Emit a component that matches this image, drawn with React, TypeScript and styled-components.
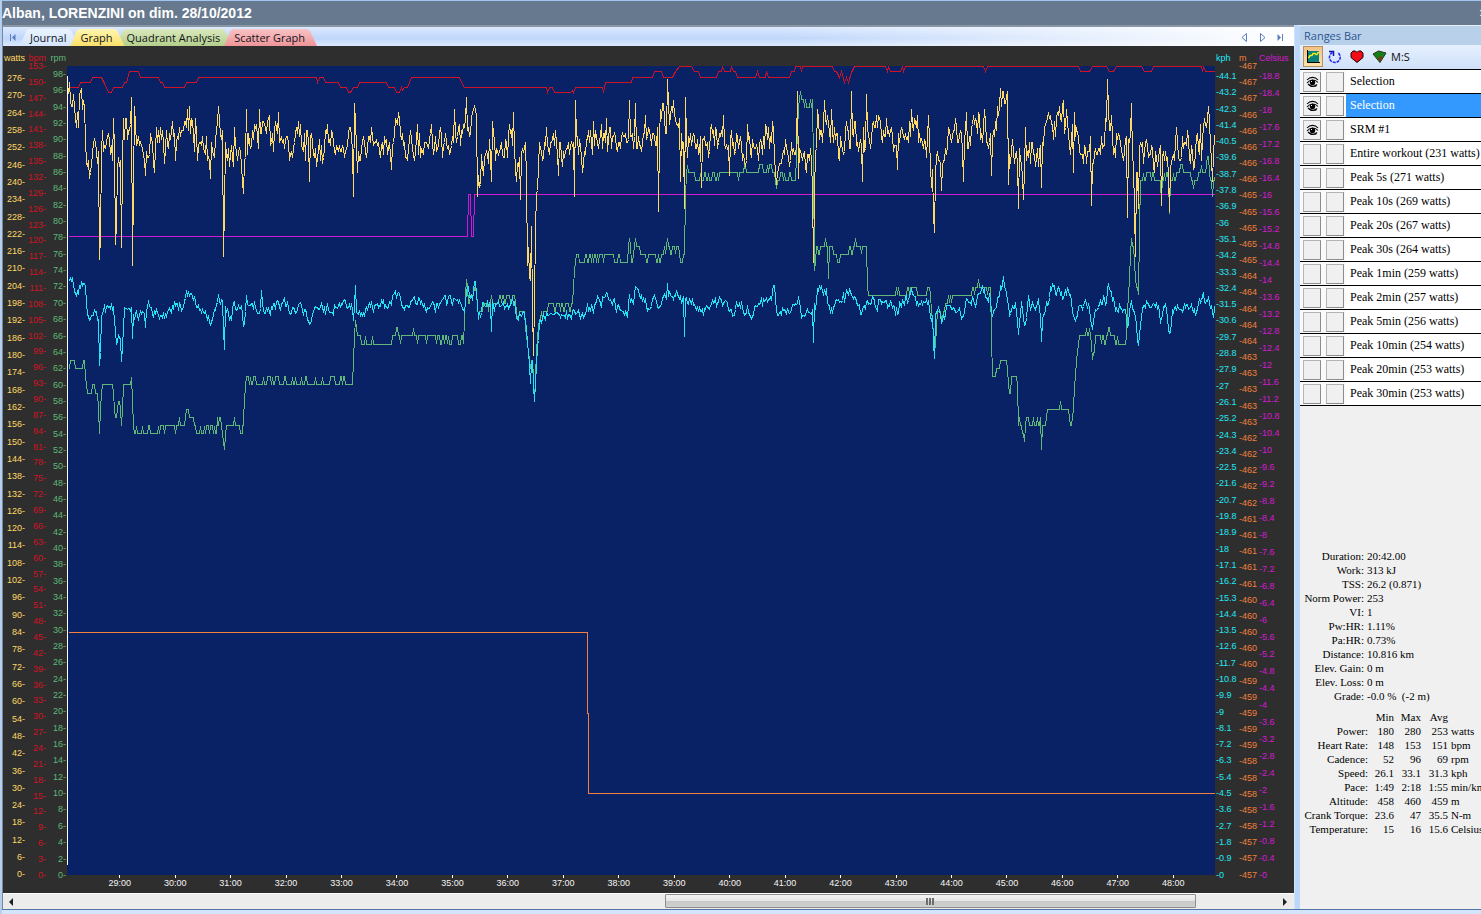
import React, { useState } from 'react'
import styled, { createGlobalStyle, css } from 'styled-components'

const GlobalStyle = createGlobalStyle`
  * {
    box-sizing: border-box;
  }

  body {
    margin: 0;
    background: #d3e4fb;
    font-family: 'Liberation Sans', Arial, sans-serif;
  }

  button {
    font: inherit;
    color: inherit;
    padding: 0;
    border: none;
    background: none;
  }

  ul, dl, dd, h1, h2 {
    margin: 0;
    padding: 0;
    list-style: none;
  }
`

/* ---------- chart geometry ---------- */

const LEFT = 68
const RIGHT = 1215
const TOP = 66
const BOTTOM = 875

const COLORS = {
    watts: '#ffd966',
    bpm: '#cf1326',
    rpm: '#5fb878',
    kph: '#22e6f7',
    alt: '#f0803c',
    temp: '#d419d4',
}

type Point = [number, number]

// Small deterministic generator, so the traces are stable between renders
const createRandom = (seed: number) => {
    let s = seed
    return () => {
        s = (s * 16807) % 2147483647
        return s / 2147483647
    }
}

const interpolate = (points: Point[], x: number) => {
    if (x <= points[0][0]) return points[0][1]
    for (let i = 1; i < points.length; i++) {
        const [x1, y1] = points[i]
        if (x <= x1) {
            const [x0, y0] = points[i - 1]
            return y0 + ((y1 - y0) * (x - x0)) / (x1 - x0)
        }
    }
    return points[points.length - 1][1]
}

interface TraceOptions {
    seed: number
    amplitude: number
    step: number
    spikes?: Point[]
}

const buildTrace = (base: Point[], { seed, amplitude, step, spikes = [] }: TraceOptions): Point[] => {
    const random = createRandom(seed)
    const peaks = new Map(spikes)
    const result: Point[] = []
    let drift = 0
    for (let x = LEFT; x <= RIGHT; x++) {
        drift = drift * 0.4 + (random() + random() - 1) * amplitude
        const peak = peaks.get(x)
        const y = peak ?? interpolate(base, x) + drift
        result.push([x, BOTTOM - 1 - Math.round((BOTTOM - 1 - y) / step) * step])
    }
    return result
}

const toPath = (points: Point[]) => 'M' + points.map(([x, y]) => `${x} ${y.toFixed(1)}`).join('L')

/* ---------- recorded channels ---------- */

const wattsBase: Point[] = [
    [68, 100], [70, 90], [74, 97], [76, 118], [80, 103], [83, 94], [85, 132], [87, 158], [90, 163], [95, 153], [98, 165],
    [102, 142], [108, 138], [112, 145], [119, 170], [122, 160], [125, 132], [130, 145], [134, 125], [137, 148], [150, 146],
    [175, 146], [184, 135], [190, 122], [194, 145], [206, 152], [214, 155], [219, 128], [225, 155], [232, 155], [238, 138],
    [243, 165], [246, 135], [254, 135], [262, 130], [272, 142], [290, 145], [310, 145], [325, 150], [350, 144], [358, 155],
    [370, 144], [390, 148], [395, 125], [402, 144], [430, 147], [464, 140], [470, 128], [475, 112], [479, 180], [482, 150],
    [500, 147], [512, 132], [516, 168], [520, 148], [525, 155], [527, 220], [530, 265], [533, 300], [536, 200], [539, 162],
    [545, 148], [570, 145], [580, 150], [600, 138], [630, 137], [655, 135], [667, 112], [678, 128], [682, 160], [688, 135],
    [700, 148], [720, 142], [730, 150], [760, 150], [772, 132], [777, 162], [785, 148], [812, 160], [815, 150], [818, 125],
    [830, 130], [836, 142], [850, 135], [860, 145], [870, 132], [895, 140], [905, 132], [927, 138], [932, 175], [937, 150],
    [942, 160], [948, 140], [960, 148], [975, 128], [990, 125], [998, 112], [1002, 98], [1006, 108], [1009, 155],
    [1015, 145], [1022, 165], [1028, 142], [1040, 150], [1048, 122], [1067, 120], [1071, 150], [1100, 152], [1106, 120],
    [1112, 138], [1118, 135], [1125, 158], [1131, 130], [1136, 190], [1140, 150], [1150, 145], [1162, 155], [1172, 155],
    [1180, 144], [1200, 150], [1207, 125], [1211, 150], [1215, 140],
]

const wattsSpikes: Point[] = [
    [69, 83], [71, 106], [76, 128], [99, 259], [100, 238], [102, 129], [113, 118], [115, 245], [116, 222], [119, 167],
    [121, 248], [123, 118], [131, 98], [132, 265], [133, 186], [134, 106], [145, 176], [154, 173], [156, 127], [187, 109],
    [189, 106], [195, 118], [210, 177], [218, 106], [223, 256], [224, 208], [234, 127], [242, 180], [243, 193], [246, 109],
    [259, 109], [278, 112], [298, 121], [309, 180], [353, 197], [354, 102], [355, 120], [357, 171], [371, 127], [391, 168],
    [395, 118], [431, 124], [454, 109], [466, 98], [474, 107], [475, 108], [477, 196], [479, 188], [491, 182], [492, 121],
    [513, 112], [516, 181], [520, 200], [527, 264], [529, 278], [531, 225], [532, 307], [533, 356], [534, 300], [558, 176],
    [574, 196], [575, 101], [582, 173], [593, 121], [606, 118], [629, 101], [635, 104], [645, 115], [658, 210], [667, 80],
    [680, 182], [684, 208], [685, 98], [701, 187], [723, 115], [729, 175], [747, 123], [772, 121], [776, 185], [797, 92],
    [798, 178], [812, 190], [813, 262], [814, 192], [817, 109], [824, 101], [831, 109], [851, 92], [862, 180], [866, 95],
    [897, 168], [911, 109], [928, 115], [931, 188], [933, 215], [934, 233], [941, 190], [963, 181], [966, 112], [978, 112],
    [984, 109], [991, 174], [1002, 90], [1007, 92], [1008, 185], [1018, 207], [1023, 200], [1025, 127], [1041, 187],
    [1048, 112], [1066, 109], [1073, 173], [1074, 113], [1091, 205], [1107, 78], [1108, 110], [1127, 216], [1131, 104],
    [1134, 212], [1135, 256], [1138, 207], [1161, 205], [1169, 210], [1200, 123], [1208, 107], [1212, 180],
]

const kphBase: Point[] = [
    [68, 285], [70, 279], [73, 281], [76, 298], [79, 287], [83, 281], [85, 290], [87, 318], [90, 318], [95, 312],
    [98, 316], [101, 313], [108, 304], [113, 310], [116, 343], [119, 333], [122, 350], [124, 306], [135, 310], [145, 316],
    [148, 306], [155, 315], [170, 308], [185, 301], [187, 293], [191, 294], [195, 303], [203, 312], [210, 322],
    [218, 300], [221, 299], [226, 315], [231, 315], [234, 301], [241, 310], [243, 332], [246, 303], [265, 309],
    [280, 301], [290, 309], [300, 305], [309, 320], [315, 307], [330, 309], [345, 303], [357, 316], [370, 309],
    [385, 306], [395, 294], [405, 303], [440, 305], [455, 300], [464, 308], [466, 291], [472, 295], [475, 284],
    [478, 320], [483, 306], [500, 305], [512, 299], [516, 317], [524, 314], [526, 330], [529, 365], [530, 380],
    [532, 357], [534, 398], [537, 350], [539, 325], [545, 313], [570, 313], [590, 309], [605, 300], [620, 305],
    [627, 316], [629, 292], [633, 305], [635, 290], [645, 304], [660, 303], [667, 291], [678, 298], [688, 298],
    [700, 311], [723, 299], [729, 312], [740, 303], [750, 311], [760, 306], [774, 293], [778, 316], [790, 306],
    [798, 300], [800, 312], [812, 313], [815, 307], [817, 292], [824, 290], [830, 306], [840, 303], [850, 292],
    [860, 309], [867, 300], [897, 309], [911, 292], [918, 305], [928, 298], [931, 322], [936, 310], [941, 322],
    [948, 302], [963, 316], [966, 295], [970, 304], [978, 291], [990, 295], [992, 316], [1000, 286], [1003, 278],
    [1006, 290], [1009, 315], [1015, 303], [1018, 328], [1021, 306], [1025, 325], [1028, 299], [1035, 309],
    [1038, 294], [1041, 325], [1045, 309], [1050, 291], [1060, 295], [1068, 290], [1073, 318], [1080, 303],
    [1088, 302], [1092, 320], [1096, 307], [1105, 300], [1108, 285], [1112, 305], [1125, 310], [1128, 326],
    [1131, 298], [1138, 338], [1142, 306], [1157, 306], [1161, 323], [1165, 303], [1169, 328], [1175, 306],
    [1190, 306], [1194, 314], [1200, 302], [1208, 294], [1212, 314], [1215, 304],
]

const kphSpikes: Point[] = [
    [99, 365], [100, 352], [121, 361], [132, 338], [145, 327], [223, 330], [224, 349], [261, 290], [353, 320],
    [355, 285], [491, 331], [530, 383], [533, 385], [534, 401], [635, 286], [667, 283], [684, 336], [813, 342],
    [934, 358], [933, 342], [1003, 276], [1018, 334], [1041, 341], [1108, 283], [1137, 340], [1169, 333],
]

const rpmBase: Point[] = [
    [68, 368], [70, 360], [74, 360], [76, 374], [79, 368], [82, 360], [84, 362], [86, 392], [89, 399], [92, 386],
    [97, 392], [98, 410], [99, 433], [101, 392], [103, 384], [112, 384], [115, 415], [117, 410], [119, 402],
    [121, 425], [123, 386], [130, 384], [131, 376], [132, 400], [133, 431], [155, 430], [165, 426], [182, 425],
    [187, 411], [191, 411], [195, 425], [202, 433], [208, 427], [216, 429], [220, 417], [222, 433], [224, 433],
    [228, 429], [235, 425], [242, 431], [245, 384], [248, 380], [300, 382], [352, 382], [353, 360], [355, 320],
    [357, 336], [361, 343], [380, 342], [394, 338], [396, 328], [400, 336], [440, 339], [463, 341], [464, 310],
    [466, 279], [468, 296], [473, 294], [475, 280], [478, 313], [482, 304], [500, 298], [510, 298], [513, 288],
    [517, 315], [524, 306], [526, 340], [530, 372], [532, 355], [534, 401], [537, 335], [540, 312], [550, 304],
    [570, 304], [572, 296], [574, 270], [576, 255], [582, 264], [593, 255], [605, 257], [627, 262], [629, 240],
    [632, 262], [635, 242], [640, 254], [658, 258], [667, 246], [678, 250], [682, 264], [684, 256], [685, 200],
    [686, 172], [700, 176], [710, 176], [730, 174], [773, 168], [776, 188], [780, 176], [795, 180], [798, 110],
    [800, 95], [803, 104], [812, 104], [813, 160], [814, 265], [816, 247], [824, 244], [830, 250], [838, 257],
    [848, 252], [856, 245], [862, 252], [866, 240], [867, 280], [869, 293], [905, 293], [912, 284], [918, 294],
    [929, 292], [932, 320], [934, 350], [937, 305], [941, 318], [948, 297], [970, 295], [977, 285], [990, 288],
    [991, 340], [992, 380], [996, 368], [999, 360], [1006, 361], [1009, 390], [1012, 376], [1017, 378],
    [1018, 422], [1023, 427], [1026, 418], [1033, 423], [1040, 420], [1044, 423], [1048, 409], [1068, 410],
    [1071, 425], [1073, 405], [1076, 360], [1079, 336], [1090, 335], [1092, 358], [1095, 343], [1106, 337],
    [1108, 322], [1112, 340], [1125, 342], [1128, 300], [1131, 240], [1133, 252], [1135, 285], [1138, 295],
    [1140, 180], [1150, 174], [1158, 180], [1175, 176], [1183, 166], [1193, 180], [1205, 168], [1208, 158],
    [1212, 190], [1215, 172],
]

const rpmSpikes: Point[] = [
    [223, 442], [224, 450], [466, 278], [534, 401], [629, 238], [635, 238], [667, 238], [797, 132], [800, 90],
    [828, 279], [934, 352], [1024, 441], [1041, 450], [1092, 360], [1131, 238], [1161, 205], [1169, 213], [1212, 193],
]

const bpmLine: Point[] = [
    [68, 87], [78, 87], [80, 82], [90, 82], [92, 77], [101, 77], [104, 83], [108, 92], [111, 92], [113, 87], [122, 87],
    [124, 82], [126, 82], [129, 71], [138, 71], [140, 77], [158, 77], [160, 82], [162, 82], [164, 87], [184, 87],
    [186, 82], [196, 82], [198, 77], [316, 77], [317, 82], [319, 77], [323, 77], [325, 82], [338, 82], [340, 87],
    [346, 87], [348, 92], [350, 92], [353, 87], [357, 87], [359, 82], [386, 82], [388, 87], [394, 87], [396, 92],
    [399, 92], [401, 87], [402, 90], [404, 87], [407, 87], [411, 77], [459, 77], [461, 82], [464, 87], [546, 87],
    [547, 92], [549, 87], [552, 87], [554, 92], [570, 92], [572, 90], [573, 92], [575, 87], [602, 87], [603, 92],
    [605, 82], [631, 82], [632, 77], [652, 77], [654, 71], [661, 71], [663, 77], [672, 77], [675, 71], [679, 66],
    [691, 66], [694, 71], [698, 71], [700, 77], [716, 77], [718, 71], [721, 71], [722, 66], [724, 71], [730, 71],
    [731, 66], [733, 71], [735, 71], [737, 77], [755, 77], [757, 71], [759, 77], [765, 77], [766, 71], [768, 77],
    [789, 77], [791, 71], [794, 71], [795, 66], [800, 66], [801, 71], [802, 66], [832, 66], [834, 71], [836, 71],
    [839, 77], [841, 71], [844, 82], [846, 77], [848, 82], [851, 72], [854, 66], [885, 66], [887, 71], [888, 66],
    [890, 71], [900, 71], [902, 66], [903, 71], [905, 66], [983, 66], [985, 71], [987, 66], [1078, 66], [1080, 71],
    [1089, 71], [1092, 66], [1106, 66], [1109, 71], [1113, 71], [1116, 66], [1141, 66], [1144, 71], [1151, 71],
    [1153, 66], [1201, 66], [1202, 71], [1203, 66], [1205, 71], [1215, 71],
]

const tempLine: Point[] = [
    [68, 236], [467, 236], [468, 194], [470, 194], [471, 236], [473, 236], [474, 194], [1215, 194],
]

const altLine: Point[] = [[68, 632], [587, 632], [587, 713], [588, 713], [588, 793], [1215, 793]]

const traces = [
    { color: COLORS.bpm, d: toPath(bpmLine) },
    { color: COLORS.alt, d: toPath(altLine) },
    { color: COLORS.temp, d: toPath(tempLine) },
    { color: COLORS.rpm, d: toPath(buildTrace(rpmBase, { seed: 911, amplitude: 6, step: 8.16, spikes: rpmSpikes })) },
    { color: COLORS.kph, d: toPath(buildTrace(kphBase, { seed: 4177, amplitude: 8, step: 1, spikes: kphSpikes })) },
    { color: COLORS.watts, d: toPath(buildTrace(wattsBase, { seed: 2012, amplitude: 21, step: 3, spikes: wattsSpikes })) },
]

/* ---------- axes ---------- */

interface AxisData {
    unit: string
    color: string
    side: 'left' | 'right'
    inset: number
    labels: string[]
}

const scale = (max: number, step: number, from = 0) => {
    const count = Math.round((max - from) / step)
    return Array.from({ length: count + 1 }, (_, i) => String(Number((max - i * step).toFixed(1))))
}

const leftAxes: AxisData[] = [
    { unit: 'watts', color: COLORS.watts, side: 'left', inset: 12, labels: scale(276, 6) },
    { unit: 'bpm', color: COLORS.bpm, side: 'left', inset: 0, labels: scale(153, 3) },
    { unit: 'rpm', color: COLORS.rpm, side: 'left', inset: 8, labels: scale(98, 2) },
]

const rightAxes: AxisData[] = [
    { unit: 'kph', color: COLORS.kph, side: 'right', inset: 10, labels: scale(44.1, 0.9) },
    {
        unit: 'm',
        color: COLORS.alt,
        side: 'right',
        inset: 0,
        labels: scale(467, 0.2, 457).map(v => String(Math.round(Number(v)))),
    },
    { unit: 'Celsius', color: COLORS.temp, side: 'right', inset: 10, labels: scale(18.8, 0.4) },
]

const minutes = Array.from({ length: 20 }, (_, i) => `${29 + i}:00`)

/* ---------- layout ---------- */

const Window = styled.div`
  display: flex;
  flex-direction: column;
  min-height: 100vh;
  border-top: 1px solid #a3c4ee;
  border-left: 2px solid #b5cff0;
`

const TitleBar = styled.header`
  display: flex;
  align-items: center;
  justify-content: space-between;
  height: 24px;
  overflow: hidden;
  background: #67798e;
  color: #ffffff;
`

const Title = styled.h1`
  font-size: 14px;
  line-height: 24px;
  font-weight: 700;
  white-space: nowrap;
`

const CloseButton = styled.button`
  flex: none;
  width: 8px;
  margin-right: -6px;
  font-size: 14px;
  line-height: 24px;
`

const Body = styled.div`
  display: grid;
  grid-template-columns: minmax(0, 1fr) 187px;
  flex: 1;
  border-bottom: 1px solid #4f74a6;
  margin-bottom: 4px;
`

const Workspace = styled.main`
  display: flex;
  flex-direction: column;
  border-top: 2px solid #8b96a5;
  border-left: 1px solid #7a8797;
`

const TabBar = styled.nav`
  display: flex;
  align-items: flex-end;
  height: 19px;
  background: linear-gradient(90deg, rgba(255, 255, 255, 0) 60%, #ffffff 100%), linear-gradient(#dbe9fe, #bfd6fb 60%, #dce9fd);
`

const NavButton = styled.button`
  display: flex;
  align-items: center;
  justify-content: center;
  width: 18px;
  height: 18px;
  color: #5b7fb8;

  &:last-child {
    margin-right: 5px;
  }
`

const TabList = styled.div`
  display: flex;
  flex: 1;
  margin-left: -2px;
`

const Tab = styled.button<{ $fill: string; $active?: boolean }>`
  position: relative;
  z-index: ${({ $active }) => ($active ? 1 : 0)};
  height: 17px;
  padding: 0 12px 0 11px;
  margin-right: -9px;
  background: ${({ $fill }) => $fill};
  clip-path: polygon(0 100%, 2px 88%, 7px 12%, 10px 0, calc(100% - 10px) 0, calc(100% - 7px) 12%, calc(100% - 1px) 88%, 100% 100%);
  font-family: 'Open Sans', 'Noto Sans', sans-serif;
  font-size: 11px;
  line-height: 17px;
  color: #10151c;
  white-space: nowrap;
`

const Chart = styled.section`
  display: grid;
  grid-template-columns: 23px 21px 20px minmax(0, 1fr) 23px 20px 36px;
  grid-template-rows: 20px minmax(400px, 1fr) 18px;
  flex: 1;
  background: #2e2e2e;
  font-size: 9px;
`

const AxisUnit = styled.div<{ $side: string }>`
  display: flex;
  justify-content: ${({ $side }) => ($side === 'left' ? 'flex-end' : 'flex-start')};
  grid-row: 1;
  padding: 0 1px;
  line-height: 25px;
  white-space: nowrap;
`

const AxisScale = styled.ul<{ $inset: number; $side: string }>`
  display: flex;
  flex-direction: column;
  justify-content: space-between;
  grid-row: 2;
  padding: ${({ $inset }) => $inset}px 1px 0;
  text-align: ${({ $side }) => ($side === 'left' ? 'right' : 'left')};

  li {
    height: 0;
    line-height: 0;
  }
`

const Plot = styled.svg`
  grid-column: 4;
  grid-row: 2;
  display: block;
  width: 100%;
  height: 100%;
  background: #082265;

  path {
    fill: none;
    stroke-width: 1px;
    vector-effect: non-scaling-stroke;
    shape-rendering: crispEdges;
  }
`

const TimeAxis = styled.ul`
  display: grid;
  grid-template-columns: repeat(20, 1fr);
  grid-column: 4;
  grid-row: 3;
  padding: 0 14px 0 25px;
  color: #f4f4f4;
  text-align: center;

  li {
    line-height: 10px;
  }

  li::before {
    content: '';
    display: block;
    width: 1px;
    height: 3px;
    margin: 0 auto;
    background: #ffffff;
  }
`

const ScrollBar = styled.div`
  display: flex;
  height: 16px;
  border-top: 1px solid #ffffff;
  background: #ececec;

  button {
    height: 15px;
    color: #202020;
  }

  button:last-child {
    margin-right: 0;
  }
`

const ScrollTrack = styled.div`
  flex: 1;
`

const ScrollThumb = styled.div`
  display: flex;
  align-items: center;
  justify-content: center;
  gap: 1px;
  height: 14px;
  border: 1px solid #8e8e8e;
  border-radius: 1px;
  background: linear-gradient(#f4f4f4 0%, #e6e6e6 48%, #c9c9c9 52%, #cfcfcf 100%);

  i {
    width: 2px;
    height: 7px;
    background: #6e6e6e;
  }
`

const Panel = styled.aside`
  display: flex;
  flex-direction: column;
  overflow: hidden;
  border-top: 1px solid #e6eefa;
  border-left: 5px solid #bdd7fb;
  margin-left: 1px;
  background: #f0f0f0;
`

const PanelTitle = styled.h2`
  padding-left: 4px;
  background: #b9d0ea;
  color: #2b568f;
  font-family: 'Open Sans', 'Noto Sans', sans-serif;
  font-size: 11px;
  font-weight: 400;
  line-height: 19px;
`

const Toolbar = styled.div`
  display: flex;
  align-items: center;
  gap: 2px;
  height: 24px;
  padding: 0 3px 1px;
  background: linear-gradient(#e6f0ff, #cfe0f8);
  font-family: 'Open Sans', 'Noto Sans', sans-serif;
  font-size: 11px;
`

const ToolButton = styled.button<{ $active?: boolean }>`
  display: flex;
  align-items: center;
  justify-content: center;
  width: 20px;
  height: 21px;
  color: #111111;

  ${({ $active }) => $active && css`
    border: 1px solid #b98f5a;
    background: linear-gradient(#f0c28a, #ffe2ad);
  `}
`

const TextToolButton = styled(ToolButton)`
  width: auto;
`

const RangeList = styled.ul`
  border-bottom: 1px solid #000000;
`

const RangeRow = styled.li`
  display: flex;
  align-items: center;
  height: 24px;
  border-top: 1px solid #000000;
  background: #ffffff;
`

const RangeCells = styled.div`
  display: flex;
  gap: 5px;
  height: 23px;
  padding: 2px 2px 1px 3px;
  background: #fafafa;
`

const CellButton = styled.button`
  display: flex;
  align-items: center;
  justify-content: center;
  width: 18px;
  height: 20px;
  border: 1px solid #b4b4b4;
  border-right-color: #8c8c8c;
  border-bottom-color: #8c8c8c;
  background: #f0f0f0;
`

const RangeName = styled.button<{ $selected: boolean }>`
  flex: 1;
  height: 23px;
  padding-left: 4px;
  background: ${({ $selected }) => ($selected ? '#3399ff' : '#ffffff')};
  color: ${({ $selected }) => ($selected ? '#ffffff' : '#000000')};
  font-family: 'Liberation Serif', 'Times New Roman', serif;
  font-size: 12px;
  line-height: 23px;
  text-align: left;
  white-space: nowrap;
`

const Stats = styled.section`
  margin-top: auto;
  padding-bottom: 73px;
  font-family: 'Liberation Serif', 'Times New Roman', serif;
  font-size: 11px;
  line-height: 14px;
  white-space: pre;
`

const Totals = styled.dl`
  display: grid;
  grid-template-columns: 64px 1fr;
  column-gap: 3px;

  dt {
    text-align: right;
  }
`

const Summary = styled.table`
  width: 100%;
  margin-top: 7px;
  border-collapse: collapse;
  table-layout: fixed;

  th, td {
    padding: 0;
    font-weight: 400;
    text-align: right;
  }

  td:last-child {
    padding-left: 3px;
    text-align: left;
  }
`

/* ---------- icons ---------- */

const ArrowIcon = ({ flip, bar }: { flip?: boolean; bar?: boolean }) => (
    <svg width="9" height="9" viewBox="0 0 9 9" aria-hidden="true">
        <g transform={flip ? 'translate(9 0) scale(-1 1)' : undefined} stroke="currentColor">
            {bar ? (
                <>
                    <path d="M1.5 1v7L5 4.5Z" fill="currentColor" stroke="none" />
                    <path d="M6.5 1v7" />
                </>
            ) : (
                <path d="M2.5 0.5v8L7 4.5Z" fill="none" />
            )}
        </g>
    </svg>
)

const ScrollArrow = ({ flip }: { flip?: boolean }) => (
    <svg width="8" height="8" viewBox="0 0 8 8" aria-hidden="true">
        <path d={flip ? 'M2 0v8L6 4Z' : 'M5 0v8L1 4Z'} fill="currentColor" />
    </svg>
)

const GraphIcon = () => (
    <svg width="14" height="14" viewBox="0 0 14 14" aria-hidden="true">
        <path d="M1 1h12v12H1Z" fill="#0b8079" />
        <path d="M1.5 0v12.5H14" fill="none" stroke="#000" />
        <path d="M2 7.5h1l1-2h2l1-2h2l1 1h1l1-2h1" fill="none" stroke="#f4f01c" strokeWidth="1.4" />
    </svg>
)

const CycleIcon = () => (
    <svg width="14" height="14" viewBox="0 0 14 14" aria-hidden="true">
        <path d="M4.5 2.5C1 4.500 .5 8.500 3 11c2.500 2 6 2 8-.5 2-2.500 1.500-6-1.500-8" fill="none" stroke="#2a2aea" strokeWidth="1.6" strokeDasharray="3 1" />
        <path d="M1 1.500h4.500V6" fill="none" stroke="#1212a8" strokeWidth="1.5" />
    </svg>
)

const HeartIcon = () => (
    <svg width="14" height="13" viewBox="0 0 14 13" aria-hidden="true">
        <path d="M7 12.500 1 7.500V3l2-2h2.500L7 2.500 8.500 1H11l2 2v4.500Z" fill="#f20d18" stroke="#1a0000" />
    </svg>
)

const GemIcon = () => (
    <svg width="15" height="13" viewBox="0 0 15 13" aria-hidden="true">
        <path d="M1 4 6.500 1l7.500 2-6 9.500Z" fill="#158018" stroke="#26331a" />
        <path d="M6 8.500 8 6l2.500 1.500L8 11.500Z" fill="#7a3a12" />
    </svg>
)

const EyeIcon = () => (
    <svg width="13" height="12" viewBox="0 0 13 12" aria-hidden="true">
        <path d="M1 4C4 .5 9 .5 12 4M1 7C4 3 9 3 12 6.500M2 8c3 3 6.500 3 9 .5" fill="none" stroke="#000" strokeWidth="1.1" />
        <circle cx="6.5" cy="6.5" r="2.7" fill="#000" />
        <rect x="5" y="5" width="1" height="1" fill="#fff" />
        <path d="M3 10l1-1M10 10.500 9 9.500M6.500 11v-1" stroke="#000" />
    </svg>
)

/* ---------- data ---------- */

const tabs = [
    { name: 'Journal', fill: 'linear-gradient(#eaf3ff, #d4e4fc)' },
    { name: 'Graph', fill: 'linear-gradient(#fff6b0, #fbdf6a)' },
    { name: 'Quadrant Analysis', fill: 'linear-gradient(#dbe9bd, #b4cf8c)' },
    { name: 'Scatter Graph', fill: 'linear-gradient(#f9c3c4, #ee9498)' },
]

const ranges = [
    'Selection',
    'Selection',
    'SRM #1',
    'Entire workout (231 watts)',
    'Peak 5s (271 watts)',
    'Peak 10s (269 watts)',
    'Peak 20s (267 watts)',
    'Peak 30s (264 watts)',
    'Peak 1min (259 watts)',
    'Peak 2min (257 watts)',
    'Peak 5min (256 watts)',
    'Peak 10min (254 watts)',
    'Peak 20min (253 watts)',
    'Peak 30min (253 watts)',
]

const totals = [
    ['Duration', '20:42.00'],
    ['Work', '313 kJ'],
    ['TSS', '26.2 (0.871)'],
    ['Norm Power', '253'],
    ['VI', '1'],
    ['Pw:HR', '1.11%'],
    ['Pa:HR', '0.73%'],
    ['Distance', '10.816 km'],
    ['Elev. Gain', '0 m'],
    ['Elev. Loss', '0 m'],
    ['Grade', '-0.0 %  (-2 m)'],
]

const summary = [
    ['Power', '180', '280', '253', 'watts'],
    ['Heart Rate', '148', '153', '151', 'bpm'],
    ['Cadence', '52', '96', '69', 'rpm'],
    ['Speed', '26.1', '33.1', '31.3', 'kph'],
    ['Pace', '1:49', '2:18', '1:55', 'min/km'],
    ['Altitude', '458', '460', '459', 'm'],
    ['Crank Torque', '23.6', '47', '35.5', 'N-m'],
    ['Temperature', '15', '16', '15.6', 'Celsius'],
]

/* ---------- components ---------- */

const Axis = ({ axis, column }: { axis: AxisData; column: number }) => (
    <>
        <AxisUnit $side={axis.side} style={{ gridColumn: column, color: axis.color }}>
            {axis.unit}
        </AxisUnit>
        <AxisScale $side={axis.side} $inset={axis.inset} style={{ gridColumn: column, color: axis.color }}>
            {axis.labels.map((label, i) => (
                <li key={i}>{axis.side === 'left' ? `${label}-` : `-${label}`}</li>
            ))}
        </AxisScale>
    </>
)

const GraphView = () => (
    <Chart aria-label="Workout graph">
        {leftAxes.map((axis, i) => (
            <Axis key={axis.unit} axis={axis} column={i + 1} />
        ))}
        <Plot viewBox={`${LEFT - 1} ${TOP} ${RIGHT - LEFT + 1} ${BOTTOM - TOP}`} preserveAspectRatio="none">
            {traces.map(({ color, d }) => (
                <path key={color} d={d} stroke={color} transform="translate(0.5 0.5)" />
            ))}
            <path d="M67.500 76V865" stroke="#ffffff" />
        </Plot>
        {rightAxes.map((axis, i) => (
            <Axis key={axis.unit} axis={axis} column={i + 5} />
        ))}
        <TimeAxis>
            {minutes.map(label => (
                <li key={label}>{label}</li>
            ))}
        </TimeAxis>
    </Chart>
)

const RangesBar = () => {
    const [selected, setSelected] = useState(1)
    const [visible, setVisible] = useState([0, 1, 2])

    const toggle = (index: number) => {
        setVisible(visible.includes(index) ? visible.filter(v => v !== index) : [...visible, index])
    }

    return (
        <Panel>
            <PanelTitle>Ranges Bar</PanelTitle>
            <Toolbar>
                <ToolButton $active aria-label="Graph"><GraphIcon /></ToolButton>
                <ToolButton aria-label="Intervals"><CycleIcon /></ToolButton>
                <ToolButton aria-label="Heart rate"><HeartIcon /></ToolButton>
                <ToolButton aria-label="Elevation"><GemIcon /></ToolButton>
                <TextToolButton>M:S</TextToolButton>
            </Toolbar>
            <RangeList>
                {ranges.map((name, i) => (
                    <RangeRow key={i}>
                        <RangeCells>
                            <CellButton aria-label={`Show ${name}`} aria-pressed={visible.includes(i)} onClick={() => toggle(i)}>
                                {visible.includes(i) && <EyeIcon />}
                            </CellButton>
                            <CellButton aria-label={`Color of ${name}`} />
                        </RangeCells>
                        <RangeName $selected={selected === i} onClick={() => setSelected(i)}>
                            {name}
                        </RangeName>
                    </RangeRow>
                ))}
            </RangeList>
            <Stats>
                <Totals>
                    {totals.map(([label, value]) => (
                        <React.Fragment key={label}>
                            <dt>{label}:</dt>
                            <dd>{value}</dd>
                        </React.Fragment>
                    ))}
                </Totals>
                <Summary>
                    <colgroup>
                        <col width="68" />
                        <col width="26" />
                        <col width="27" />
                        <col width="27" />
                        <col />
                    </colgroup>
                    <thead>
                        <tr>
                            <td />
                            <th scope="col">Min</th>
                            <th scope="col">Max</th>
                            <th scope="col">Avg</th>
                            <td />
                        </tr>
                    </thead>
                    <tbody>
                        {summary.map(([label, ...cells]) => (
                            <tr key={label}>
                                <th scope="row">{label}:</th>
                                {cells.map((cell, i) => (
                                    <td key={i}>{cell}</td>
                                ))}
                            </tr>
                        ))}
                    </tbody>
                </Summary>
            </Stats>
        </Panel>
    )
}

const App = () => {
    const [activeTab, setActiveTab] = useState('Graph')

    return (
        <>
            <GlobalStyle />
            <Window>
                <TitleBar>
                    <Title>Alban, LORENZINI on dim. 28/10/2012</Title>
                    <CloseButton aria-label="Close">×</CloseButton>
                </TitleBar>
                <Body>
                    <Workspace>
                        <TabBar>
                            <NavButton aria-label="First tab"><ArrowIcon bar flip /></NavButton>
                            <TabList role="tablist">
                                {tabs.map(({ name, fill }) => (
                                    <Tab
                                        key={name}
                                        role="tab"
                                        aria-selected={activeTab === name}
                                        $fill={fill}
                                        $active={activeTab === name}
                                        onClick={() => setActiveTab(name)}
                                    >
                                        {name}
                                    </Tab>
                                ))}
                            </TabList>
                            <NavButton aria-label="Previous tab"><ArrowIcon flip /></NavButton>
                            <NavButton aria-label="Next tab"><ArrowIcon /></NavButton>
                            <NavButton aria-label="Last tab"><ArrowIcon bar /></NavButton>
                        </TabBar>
                        <GraphView />
                        <ScrollBar>
                            <NavButton aria-label="Scroll left"><ScrollArrow /></NavButton>
                            <ScrollTrack>
                                <ScrollThumb style={{ width: '42.3%', marginLeft: '51.3%' }}>
                                    <i /><i /><i />
                                </ScrollThumb>
                            </ScrollTrack>
                            <NavButton aria-label="Scroll right"><ScrollArrow flip /></NavButton>
                        </ScrollBar>
                    </Workspace>
                    <RangesBar />
                </Body>
            </Window>
        </>
    )
}

export default App
